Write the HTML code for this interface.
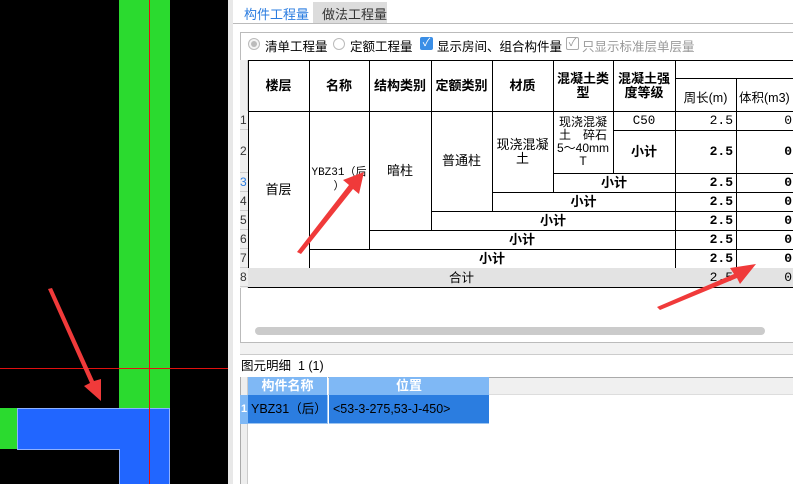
<!DOCTYPE html>
<html><head><meta charset="utf-8"><style>
*{margin:0;padding:0;box-sizing:border-box}
body{width:793px;height:484px;overflow:hidden;position:relative;background:#fff;font-family:"Liberation Sans","Noto Sans CJK SC",sans-serif;font-size:12px;color:#000}
.a{position:absolute}
.c{position:absolute;border-right:1px solid #000;border-bottom:1px solid #000;display:flex;align-items:center;justify-content:center;text-align:center;line-height:14px;font-size:12.5px}
.b{font-weight:bold;font-size:13px}
.r{justify-content:flex-end;padding-right:3px;font-family:"Liberation Mono","Noto Sans CJK SC",monospace;font-weight:bold;font-size:13px}
.rn{position:absolute;left:240px;width:8px;font-size:12px;color:#333;background:#eee;border-bottom:1px solid #ccc;display:flex;align-items:center}
</style></head><body>
<!-- canvas -->
<div class="a" style="left:0;top:0;width:228px;height:484px;background:#000"></div>
<div class="a" style="left:119px;top:0;width:51px;height:410px;background:#2bda2f"></div>
<div class="a" style="left:0;top:408px;width:18px;height:41px;background:#2bda2f"></div>
<div class="a" style="left:17px;top:408px;width:153px;height:42px;background:#2166ff;border:1px solid #8fb1ff;border-right:1px solid #8fb1ff"></div>
<div class="a" style="left:119px;top:449px;width:51px;height:35px;background:#2166ff;border-left:1px solid #8fb1ff;border-right:1px solid #8fb1ff"></div>
<div class="a" style="left:120px;top:448px;width:49px;height:3px;background:#2166ff"></div>
<div class="a" style="left:149px;top:0;width:1px;height:484px;background:#e01010"></div>
<div class="a" style="left:0;top:368px;width:228px;height:1px;background:#e01010"></div>
<div class="a" style="left:228px;top:0;width:5px;height:484px;background:#e8e8e8"></div>
<!-- right panel -->
<div class="a" style="left:233px;top:0;width:560px;height:484px;background:#fff"></div>
<div class="a" style="left:244px;top:4px;color:#2a7ce0;font-size:13px">构件工程量</div>
<div class="a" style="left:313px;top:2px;width:74px;height:21px;background:#dcdcdc;font-size:13px;color:#333;padding:2px 0 0 9px">做法工程量</div>
<div class="a" style="left:233px;top:23px;width:560px;height:1px;background:#bbb"></div>
<div class="a" style="left:240px;top:32px;width:553px;height:1px;background:#bbb"></div>
<div class="a" style="left:240px;top:32px;width:1px;height:310px;background:#bbb"></div>
<div class="a" style="left:248px;top:38px;width:12px;height:12px;border:1px solid #bbb;border-radius:50%;background:#f4f4f4"></div>
<div class="a" style="left:251px;top:41px;width:6px;height:6px;border-radius:50%;background:#bbb"></div>
<div class="a" style="left:265px;top:36px;font-size:12.5px">清单工程量</div>
<div class="a" style="left:333px;top:38px;width:12px;height:12px;border:1px solid #bbb;border-radius:50%"></div>
<div class="a" style="left:350px;top:36px;font-size:12.5px">定额工程量</div>
<div class="a" style="left:420px;top:37px;width:13px;height:13px;background:#3a8ee6;border-radius:2px;color:#fff;font-size:11px;line-height:13px;text-align:center">✓</div>
<div class="a" style="left:437px;top:36px;font-size:12.5px">显示房间、组合构件量</div>
<div class="a" style="left:566px;top:37px;width:13px;height:13px;border:1px solid #aaa;border-radius:2px;color:#999;font-size:11px;line-height:11px;text-align:center">✓</div>
<div class="a" style="left:582px;top:36px;font-size:12.5px;color:#999">只显示标准层单层量</div>
<!-- row number column -->
<div class="a" style="left:240px;top:60px;width:8px;height:228px;background:#eee;border-right:1px solid #ccc"></div>
<div class="rn" style="top:111px;height:19px">1</div>
<div class="rn" style="top:130px;height:43px">2</div>
<div class="rn" style="top:173px;height:19px;color:#2a7ce0">3</div>
<div class="rn" style="top:192px;height:19px">4</div>
<div class="rn" style="top:211px;height:19px">5</div>
<div class="rn" style="top:230px;height:19px">6</div>
<div class="rn" style="top:249px;height:19px">7</div>
<div class="rn" style="top:268px;height:19px">8</div>
<!-- table -->
<div class="a" style="left:248px;top:60px;width:545px;height:1px;background:#000"></div>
<div class="a" style="left:248px;top:60px;width:1px;height:228px;background:#000"></div>
<div class="c b" style="left:248px;top:60px;width:62px;height:52px">楼层</div>
<div class="c b" style="left:309px;top:60px;width:61px;height:52px">名称</div>
<div class="c b" style="left:369px;top:60px;width:63px;height:52px">结构类别</div>
<div class="c b" style="left:431px;top:60px;width:62px;height:52px">定额类别</div>
<div class="c b" style="left:492px;top:60px;width:62px;height:52px">材质</div>
<div class="c b" style="left:553px;top:60px;width:61px;height:52px">混凝土类<br>型</div>
<div class="c b" style="left:613px;top:60px;width:63px;height:52px">混凝土强<br>度等级</div>
<div class="c" style="left:675px;top:60px;width:118px;height:19px;border-right:none"></div>
<div class="c" style="left:675px;top:78px;width:62px;height:34px;padding-top:6px">周长(m)</div>
<div class="c" style="left:736px;top:78px;width:60px;height:34px;justify-content:flex-start;padding-left:3px;padding-top:6px">体积(m3)</div>

<div class="c" style="left:248px;top:111px;width:62px;height:158px;font-size:13px">首层</div>
<div class="c" style="left:309px;top:111px;width:61px;height:139px;font-size:11px;font-family:'Liberation Mono','Noto Sans CJK SC',monospace">YBZ31（后<br>）</div>
<div class="c" style="left:369px;top:111px;width:63px;height:120px;font-size:13px">暗柱</div>
<div class="c" style="left:431px;top:111px;width:62px;height:101px;font-size:13px">普通柱</div>
<div class="c" style="left:492px;top:111px;width:62px;height:82px;font-size:13px">现浇混凝<br>土</div>
<div class="c" style="left:553px;top:111px;width:61px;height:63px;font-size:12px;line-height:13px">现浇混凝<br>土　碎石<br>5～40mm<br>T</div>
<div class="c" style="left:613px;top:111px;width:63px;height:20px;font-family:'Liberation Mono',monospace">C50</div>
<div class="c b" style="left:613px;top:130px;width:63px;height:44px">小计</div>
<div class="c b" style="left:553px;top:173px;width:123px;height:20px">小计</div>
<div class="c b" style="left:492px;top:192px;width:184px;height:20px">小计</div>
<div class="c b" style="left:431px;top:211px;width:245px;height:20px">小计</div>
<div class="c b" style="left:369px;top:230px;width:307px;height:20px">小计</div>
<div class="c b" style="left:309px;top:249px;width:367px;height:20px">小计</div>
<div class="c" style="left:248px;top:268px;width:428px;height:20px;background:#e3e3e3">合计</div>
<div class="c r" style="left:675px;top:111px;width:62px;height:20px;font-weight:normal">2.5</div>
<div class="c r" style="left:675px;top:130px;width:62px;height:44px">2.5</div>
<div class="c r" style="left:675px;top:173px;width:62px;height:20px">2.5</div>
<div class="c r" style="left:675px;top:192px;width:62px;height:20px">2.5</div>
<div class="c r" style="left:675px;top:211px;width:62px;height:20px">2.5</div>
<div class="c r" style="left:675px;top:230px;width:62px;height:20px">2.5</div>
<div class="c r" style="left:675px;top:249px;width:62px;height:20px">2.5</div>
<div class="c r" style="left:675px;top:268px;width:62px;height:20px;background:#e3e3e3;font-weight:normal">2.5</div>
<div class="c r" style="left:736px;top:111px;width:60px;height:20px;font-weight:normal">0</div>
<div class="c r" style="left:736px;top:130px;width:60px;height:44px">0</div>
<div class="c r" style="left:736px;top:173px;width:60px;height:20px">0</div>
<div class="c r" style="left:736px;top:192px;width:60px;height:20px">0</div>
<div class="c r" style="left:736px;top:211px;width:60px;height:20px">0</div>
<div class="c r" style="left:736px;top:230px;width:60px;height:20px">0</div>
<div class="c r" style="left:736px;top:249px;width:60px;height:20px">0</div>
<div class="c r" style="left:736px;top:268px;width:60px;height:20px;background:#e3e3e3;font-weight:normal">0</div>
<!-- scrollbar -->
<div class="a" style="left:255px;top:327px;width:510px;height:8px;background:#cbcbcb;border-radius:4px"></div>
<div class="a" style="left:240px;top:342px;width:553px;height:1px;background:#bbb"></div>
<div class="a" style="left:240px;top:343px;width:553px;height:11px;background:#f2f2f2"></div>
<div class="a" style="left:240px;top:354px;width:553px;height:1px;background:#ccc"></div>
<div class="a" style="left:241px;top:355px;font-size:12.5px">图元明细&nbsp;&nbsp;1 (1)</div>
<!-- bottom grid -->
<div class="a" style="left:240px;top:377px;width:553px;height:18px;background:#f0f0f0;border-top:1px solid #aaa;border-bottom:1px solid #ddd"></div>
<div class="a" style="left:240px;top:377px;width:8px;height:107px;background:#eee;border-right:1px solid #ccc;border-left:1px solid #aaa"></div>
<div class="a" style="left:248px;top:377px;width:80px;height:18px;background:#7fb8f5;color:#fff;font-weight:bold;font-size:13px;text-align:center;line-height:18px;border-right:1px solid #fff">构件名称</div>
<div class="a" style="left:329px;top:377px;width:160px;height:18px;background:#7fb8f5;color:#fff;font-weight:bold;font-size:13px;text-align:center;line-height:18px">位置</div>
<div class="a" style="left:240px;top:395px;width:8px;height:29px;background:#7fb8f5;color:#fff;font-weight:bold;font-size:11px;line-height:29px;padding-left:1px">1</div>
<div class="a" style="left:248px;top:395px;width:80px;height:29px;background:#2b7de0;line-height:29px;padding-left:3px;font-size:12.5px;border-right:1px solid #9cc4f0;border-bottom:1px solid #9cc4f0">YBZ31（后）</div>
<div class="a" style="left:329px;top:395px;width:160px;height:29px;background:#2b7de0;line-height:29px;padding-left:4px;font-size:12.5px;border-bottom:1px solid #9cc4f0">&lt;53-3-275,53-J-450&gt;</div>
<!-- arrows -->
<svg class="a" style="left:0;top:0" width="793" height="484">
<polygon points="48,289 90,383 84,386 101,401 101,379 94,381 52,288" fill="#f03a3a"/>
<polygon points="297,252 349,185 343,180 364,172 359,194 353,189 301,254" fill="#f03a3a"/>
<polygon points="657,307 734,274 730,268 756,264 740,284 737,278 660,310" fill="#f03a3a"/>
</svg>
</body></html>
